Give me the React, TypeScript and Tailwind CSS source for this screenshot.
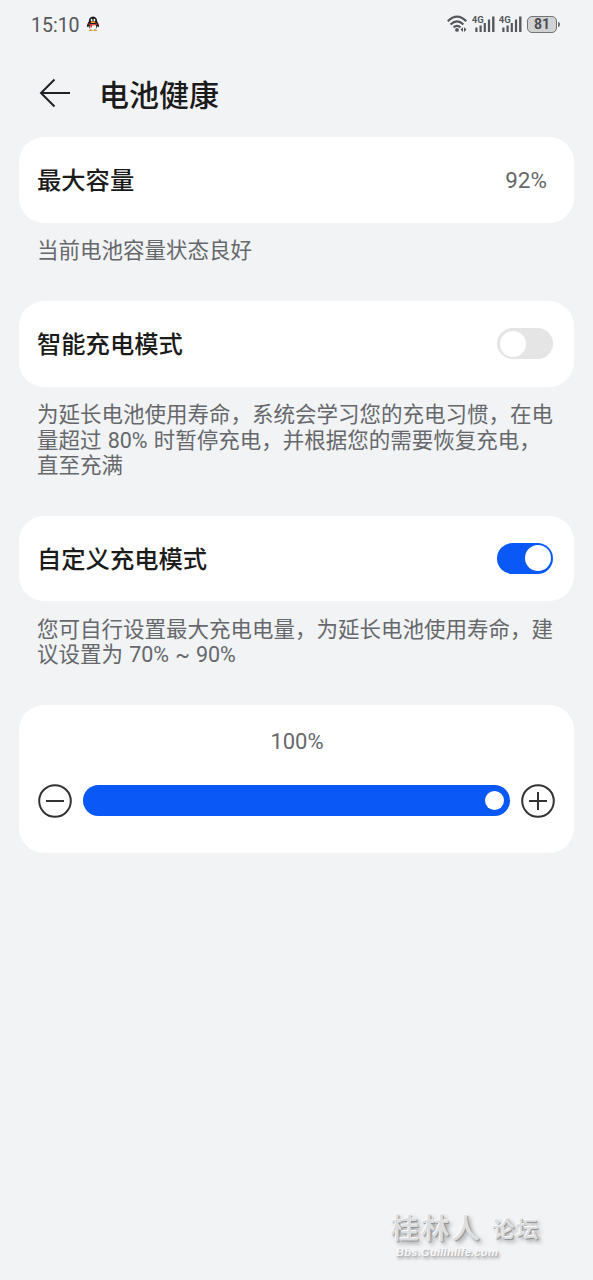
import { useState } from "react";
import type { ReactNode } from "react";

function Penguin() {
    return (
        <svg width="14" height="16" viewBox="0 0 14 16">
            <ellipse cx="7" cy="9" rx="6.400" ry="6.200" fill="#fff" />
            <path d="M7 0.500C4.200 0.500 2.800 2.800 2.800 5.500C1.600 7.300 0.600 9 1 11.200L2.600 10.200C3.300 12.800 5 14.200 7 14.200S10.700 12.800 11.400 10.200L13 11.200C13.400 9 12.400 7.300 11.200 5.500C11.200 2.800 9.800 0.500 7 0.500Z" fill="#1b1a20" />
            <ellipse cx="7" cy="11" rx="3.300" ry="3" fill="#fff" />
            <ellipse cx="5.600" cy="4" rx="0.900" ry="1.200" fill="#fff" />
            <ellipse cx="8.400" cy="4" rx="0.900" ry="1.200" fill="#fff" />
            <ellipse cx="7" cy="6.200" rx="2.500" ry="0.900" fill="#f0a020" />
            <path d="M2.800 7.300Q7 9.300 11.200 7.300V8.700Q8.500 9.700 6 9.500V11.500H4.300V9.200L2.800 8.700Z" fill="#d8392f" />
            <path d="M2.400 14.200Q4.500 12.800 6.600 14.500Q4.800 15.800 2.400 14.200ZM11.600 14.200Q9.500 12.800 7.400 14.500Q9.200 15.800 11.600 14.200Z" fill="#e59a2c" />
        </svg>
    );
}

function Wifi() {
    return (
        <svg width="21" height="18" viewBox="0 0 21 18" fill="none" stroke="#55575a" strokeWidth="2.100">
            <path d="M0.700 6.200Q10 -3 19.300 6.200" />
            <path d="M3.600 9.400Q10 3.200 16.400 9.400" />
            <path d="M6.500 12.400Q10 9.300 13.500 12.400" />
            <circle cx="10" cy="14.900" r="1.900" fill="#55575a" stroke="none" />
            <path d="M16 12.200V17L13.500 14.600ZM17 12.200V17L19.500 14.600Z" fill="#55575a" stroke="none" />
        </svg>
    );
}

function Signal() {
    return (
        <svg width="24" height="18" viewBox="0 0 24 18" fill="#55575a">
            <text x="-0.300" y="7.800" fontFamily="Roboto, sans-serif" fontWeight="700" fontSize="9.500">4G</text>
            <rect x="3.300" y="12.500" width="2.200" height="4.500" />
            <rect x="7.500" y="10.500" width="2.200" height="6.500" />
            <rect x="11.700" y="8" width="2.200" height="9" />
            <rect x="15.900" y="4.500" width="2.200" height="12.500" />
            <rect x="20.100" y="1.500" width="2.400" height="15.500" />
        </svg>
    );
}

function BackArrow() {
    return (
        <svg width="32" height="30" viewBox="0 0 32 30" fill="none" stroke="#202124" strokeWidth="2">
            <path d="M31 15H2M15.500 1.500L2 15L15.500 28.500" />
        </svg>
    );
}

function Card({ children }: { children: ReactNode }) {
    return (
        <div className="flex h-[85.500px] items-center justify-between rounded-[25px] bg-white pr-[21px] pl-[18px]">
            {children}
        </div>
    );
}

function Title({ children }: { children: ReactNode }) {
    return <h2 className="pb-px text-[24.3px] leading-9 font-medium text-[#1b1b1b]">{children}</h2>;
}

function Note({ lines }: { lines: string[] }) {
    return (
        <div className="pt-[15.500px] pl-[18px] font-[Roboto,'Noto_Sans_CJK_SC',sans-serif] text-[21.500px] leading-[25.500px] [word-spacing:0.8px] whitespace-nowrap text-[#66686b]">
            {lines.map((line) => (
                <p key={line}>{line}</p>
            ))}
        </div>
    );
}

function Toggle({ on, onChange }: { on: boolean; onChange: () => void }) {
    return (
        <button
            role="switch"
            aria-checked={on}
            onClick={onChange}
            className={`flex h-[31px] w-14 items-center rounded-full px-[2.500px] ${on ? "justify-end bg-[#0a59f7]" : "justify-start bg-[#e5e5e5]"}`}
        >
            <span className="size-[26px] rounded-full bg-white" />
        </button>
    );
}

function StepButton({ plus, onClick }: { plus?: boolean; onClick: () => void }) {
    return (
        <button onClick={onClick}>
            <svg width="34" height="34" viewBox="0 0 34 34" fill="none" stroke="#333" strokeWidth="2">
                <circle cx="17" cy="17" r="15.800" />
                <path d={plus ? "M8 17H26M17 8V26" : "M8 17H26"} />
            </svg>
        </button>
    );
}

export default function App() {
    const [smart, setSmart] = useState(false);
    const [custom, setCustom] = useState(true);
    const [limit, setLimit] = useState(100);

    return (
        <div className="flex h-[1280px] w-[593px] flex-col overflow-hidden bg-[#f1f3f5] font-['Noto_Sans_CJK_SC',sans-serif]">
            {/* Status bar */}
            <div className="flex h-12 items-center justify-between pr-[33px] pl-[31px]">
                <div className="flex items-center gap-[6px]">
                    <span className="pt-[3px] font-[Roboto,sans-serif] text-[19.500px] leading-6 text-[#55575a]">15:10</span>
                    <Penguin />
                </div>
                <div className="flex items-center">
                    <Wifi />
                    <span className="ml-1"><Signal /></span>
                    <span className="ml-[3px]"><Signal /></span>
                    <span className="ml-1 flex h-[17px] w-[30px] items-center justify-center rounded-[5px] border-[1.500px] border-[#737477] bg-[#d0d2d4] font-[Roboto,sans-serif] text-[14px] font-bold text-[#4c4e50]">
                        81
                    </span>
                    <span className="ml-px h-[5px] w-[2px] rounded-r bg-[#737477]" />
                </div>
            </div>

            {/* Header */}
            <div className="flex h-[89px] items-center gap-[28px] pt-px pl-[39px]">
                <BackArrow />
                <h1 className="pb-px text-[30px] leading-10 font-medium text-[#1b1b1b]">电池健康</h1>
            </div>

            <main className="flex flex-col px-[19px]">
                <section className="h-[164px]">
                    <Card>
                        <Title>最大容量</Title>
                        <span className="mr-[6px] pt-[2px] font-[Roboto,sans-serif] text-[22.500px] text-[#66686b]">92%</span>
                    </Card>
                    <Note lines={["当前电池容量状态良好"]} />
                </section>

                <section className="h-[214.500px]">
                    <Card>
                        <Title>智能充电模式</Title>
                        <Toggle on={smart} onChange={() => setSmart(!smart)} />
                    </Card>
                    <Note
                        lines={[
                            "为延长电池使用寿命，系统会学习您的充电习惯，在电",
                            "量超过 80% 时暂停充电，并根据您的需要恢复充电，",
                            "直至充满",
                        ]}
                    />
                </section>

                <section className="h-[189.500px]">
                    <Card>
                        <Title>自定义充电模式</Title>
                        <Toggle on={custom} onChange={() => setCustom(!custom)} />
                    </Card>
                    <Note
                        lines={[
                            "您可自行设置最大充电电量，为延长电池使用寿命，建",
                            "议设置为 70% ~ 90%",
                        ]}
                    />
                </section>

                <section className="h-[147.500px] rounded-[25px] bg-white px-[19px] pt-[21px]">
                    <p className="pl-px text-center font-[Roboto,sans-serif] text-[22px] leading-8 text-[#66686b]">{limit}%</p>
                    <div className="mt-[25.500px] flex items-center gap-[11px]">
                        <StepButton onClick={() => setLimit(Math.max(50, limit - 5))} />
                        <div className="h-[31px] flex-1 rounded-full bg-[#e5e5e5]">
                            <div
                                className="flex h-full items-center justify-end rounded-full bg-[#0a59f7] pr-[6px]"
                                style={{ width: `${limit}%` }}
                            >
                                <span className="size-[19px] rounded-full bg-white" />
                            </div>
                        </div>
                        <StepButton plus onClick={() => setLimit(Math.min(100, limit + 5))} />
                    </div>
                </section>
            </main>

            {/* Forum watermark */}
            <footer className="mt-auto mb-[21px] ml-[391px] font-['Liberation_Sans','Noto_Sans_CJK_SC',sans-serif] text-[#dcddde] [text-shadow:-1px_-1px_0_#fafafa,1px_1px_1px_#8b8d90,3px_3px_4px_#989a9d]">
                <div className="flex h-[30px] items-center gap-[10px] leading-[30px] font-medium">
                    <span className="text-[28px] tracking-[2.500px]">桂林人</span>
                    <span className="text-[22px] tracking-[2px]">论坛</span>
                </div>
                <p className="ml-[5px] text-[11px] leading-[14px] font-bold tracking-[0.300px] text-[#f8f8f8] italic [text-shadow:1px_1px_1px_#b4b6b8,2px_3px_3px_#a2a4a7]">Bbs.Guilinlife.com</p>
            </footer>
        </div>
    );
}
